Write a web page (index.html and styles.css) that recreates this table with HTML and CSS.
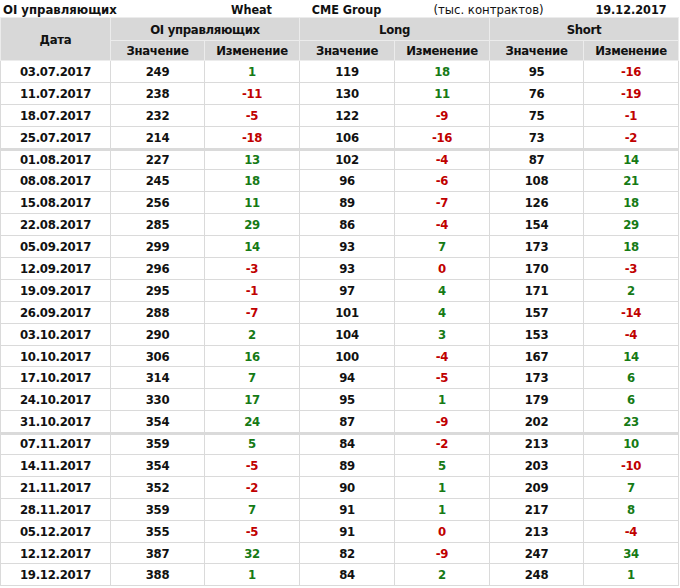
FILE: index.html
```html
<!DOCTYPE html>
<html lang="ru">
<head>
<meta charset="utf-8">
<title>OI управляющих — Wheat</title>
<link rel="stylesheet" href="styles.css">
</head>
<body>
<div class="title">
  <span class="t-left">OI управляющих</span>
  <span class="t-c3">Wheat</span>
  <span class="t-c4">CME Group</span>
  <span class="t-c56">(тыс. контрактов)</span>
  <span class="t-c7">19.12.2017</span>
</div>
<table class="grid">
  <colgroup>
    <col class="c-date"><col class="c-a"><col class="c-b"><col class="c-b"><col class="c-b"><col class="c-a"><col class="c-b">
  </colgroup>
  <thead>
    <tr class="h1">
      <th rowspan="2">Дата</th>
      <th colspan="2">OI управляющих</th>
      <th colspan="2">Long</th>
      <th colspan="2">Short</th>
    </tr>
    <tr class="h2">
      <th>Значение</th><th>Изменение</th>
      <th>Значение</th><th>Изменение</th>
      <th>Значение</th><th>Изменение</th>
    </tr>
  </thead>
  <tbody>
    <tr><td>03.07.2017</td><td>249</td><td class="up">1</td><td>119</td><td class="up">18</td><td>95</td><td class="dn">-16</td></tr>
    <tr><td>11.07.2017</td><td>238</td><td class="dn">-11</td><td>130</td><td class="up">11</td><td>76</td><td class="dn">-19</td></tr>
    <tr><td>18.07.2017</td><td>232</td><td class="dn">-5</td><td>122</td><td class="dn">-9</td><td>75</td><td class="dn">-1</td></tr>
    <tr><td>25.07.2017</td><td>214</td><td class="dn">-18</td><td>106</td><td class="dn">-16</td><td>73</td><td class="dn">-2</td></tr>
    <tr class="sep"><td>01.08.2017</td><td>227</td><td class="up">13</td><td>102</td><td class="dn">-4</td><td>87</td><td class="up">14</td></tr>
    <tr><td>08.08.2017</td><td>245</td><td class="up">18</td><td>96</td><td class="dn">-6</td><td>108</td><td class="up">21</td></tr>
    <tr><td>15.08.2017</td><td>256</td><td class="up">11</td><td>89</td><td class="dn">-7</td><td>126</td><td class="up">18</td></tr>
    <tr><td>22.08.2017</td><td>285</td><td class="up">29</td><td>86</td><td class="dn">-4</td><td>154</td><td class="up">29</td></tr>
    <tr><td>05.09.2017</td><td>299</td><td class="up">14</td><td>93</td><td class="up">7</td><td>173</td><td class="up">18</td></tr>
    <tr><td>12.09.2017</td><td>296</td><td class="dn">-3</td><td>93</td><td class="dn">0</td><td>170</td><td class="dn">-3</td></tr>
    <tr><td>19.09.2017</td><td>295</td><td class="dn">-1</td><td>97</td><td class="up">4</td><td>171</td><td class="up">2</td></tr>
    <tr><td>26.09.2017</td><td>288</td><td class="dn">-7</td><td>101</td><td class="up">4</td><td>157</td><td class="dn">-14</td></tr>
    <tr><td>03.10.2017</td><td>290</td><td class="up">2</td><td>104</td><td class="up">3</td><td>153</td><td class="dn">-4</td></tr>
    <tr><td>10.10.2017</td><td>306</td><td class="up">16</td><td>100</td><td class="dn">-4</td><td>167</td><td class="up">14</td></tr>
    <tr><td>17.10.2017</td><td>314</td><td class="up">7</td><td>94</td><td class="dn">-5</td><td>173</td><td class="up">6</td></tr>
    <tr><td>24.10.2017</td><td>330</td><td class="up">17</td><td>95</td><td class="up">1</td><td>179</td><td class="up">6</td></tr>
    <tr><td>31.10.2017</td><td>354</td><td class="up">24</td><td>87</td><td class="dn">-9</td><td>202</td><td class="up">23</td></tr>
    <tr class="sep"><td>07.11.2017</td><td>359</td><td class="up">5</td><td>84</td><td class="dn">-2</td><td>213</td><td class="up">10</td></tr>
    <tr><td>14.11.2017</td><td>354</td><td class="dn">-5</td><td>89</td><td class="up">5</td><td>203</td><td class="dn">-10</td></tr>
    <tr><td>21.11.2017</td><td>352</td><td class="dn">-2</td><td>90</td><td class="up">1</td><td>209</td><td class="up">7</td></tr>
    <tr><td>28.11.2017</td><td>359</td><td class="up">7</td><td>91</td><td class="up">1</td><td>217</td><td class="up">8</td></tr>
    <tr><td>05.12.2017</td><td>355</td><td class="dn">-5</td><td>91</td><td class="dn">0</td><td>213</td><td class="dn">-4</td></tr>
    <tr><td>12.12.2017</td><td>387</td><td class="up">32</td><td>82</td><td class="dn">-9</td><td>247</td><td class="up">34</td></tr>
    <tr><td>19.12.2017</td><td>388</td><td class="up">1</td><td>84</td><td class="up">2</td><td>248</td><td class="up">1</td></tr>
  </tbody>
</table>
</body>
</html>
```
FILE: styles.css
```css
html, body {
  margin: 0;
  padding: 0;
  background: #ffffff;
}
body {
  font-family: "DejaVu Sans Condensed", "DejaVu Sans", sans-serif;
  font-weight: bold;
  font-size: 13px;
  letter-spacing: -0.3px;
  color: #111111;
}
.title {
  display: grid;
  grid-template-columns: 110px 94px 95px 95px 95px 94px 96px;
  height: 17px;
  line-height: 19px;
  white-space: nowrap;
  font-size: 12.5px;
  letter-spacing: 0;
}
.t-left { grid-column: 1 / 3; padding-left: 3px; font-size: 13px; }
.t-c3 { grid-column: 3; text-align: center; }
.t-c4 { grid-column: 4; text-align: center; }
.t-c56 { grid-column: 5 / 7; text-align: center; font-weight: normal; font-size: 13px; }
.t-c7 { grid-column: 7; text-align: center; }

.grid {
  border-collapse: collapse;
  width: 679px;
  table-layout: fixed;
}
.c-date { width: 110px; }
.c-a { width: 94px; }
.c-b { width: 95px; }
.grid th, .grid td {
  border: 1px solid #dadada;
  text-align: center;
  padding: 0;
  white-space: nowrap;
}
.grid th {
  background: #d8d8d8;
  border-color: #ececec;
}
.h1 th { height: 22px; }
.h2 th { height: 19px; }
.grid td { height: 20.9px; }
.grid tr.sep td { box-shadow: inset 0 2px 0 #dadada; }
.up { color: #157a15; }
.dn { color: #c00000; }
```
